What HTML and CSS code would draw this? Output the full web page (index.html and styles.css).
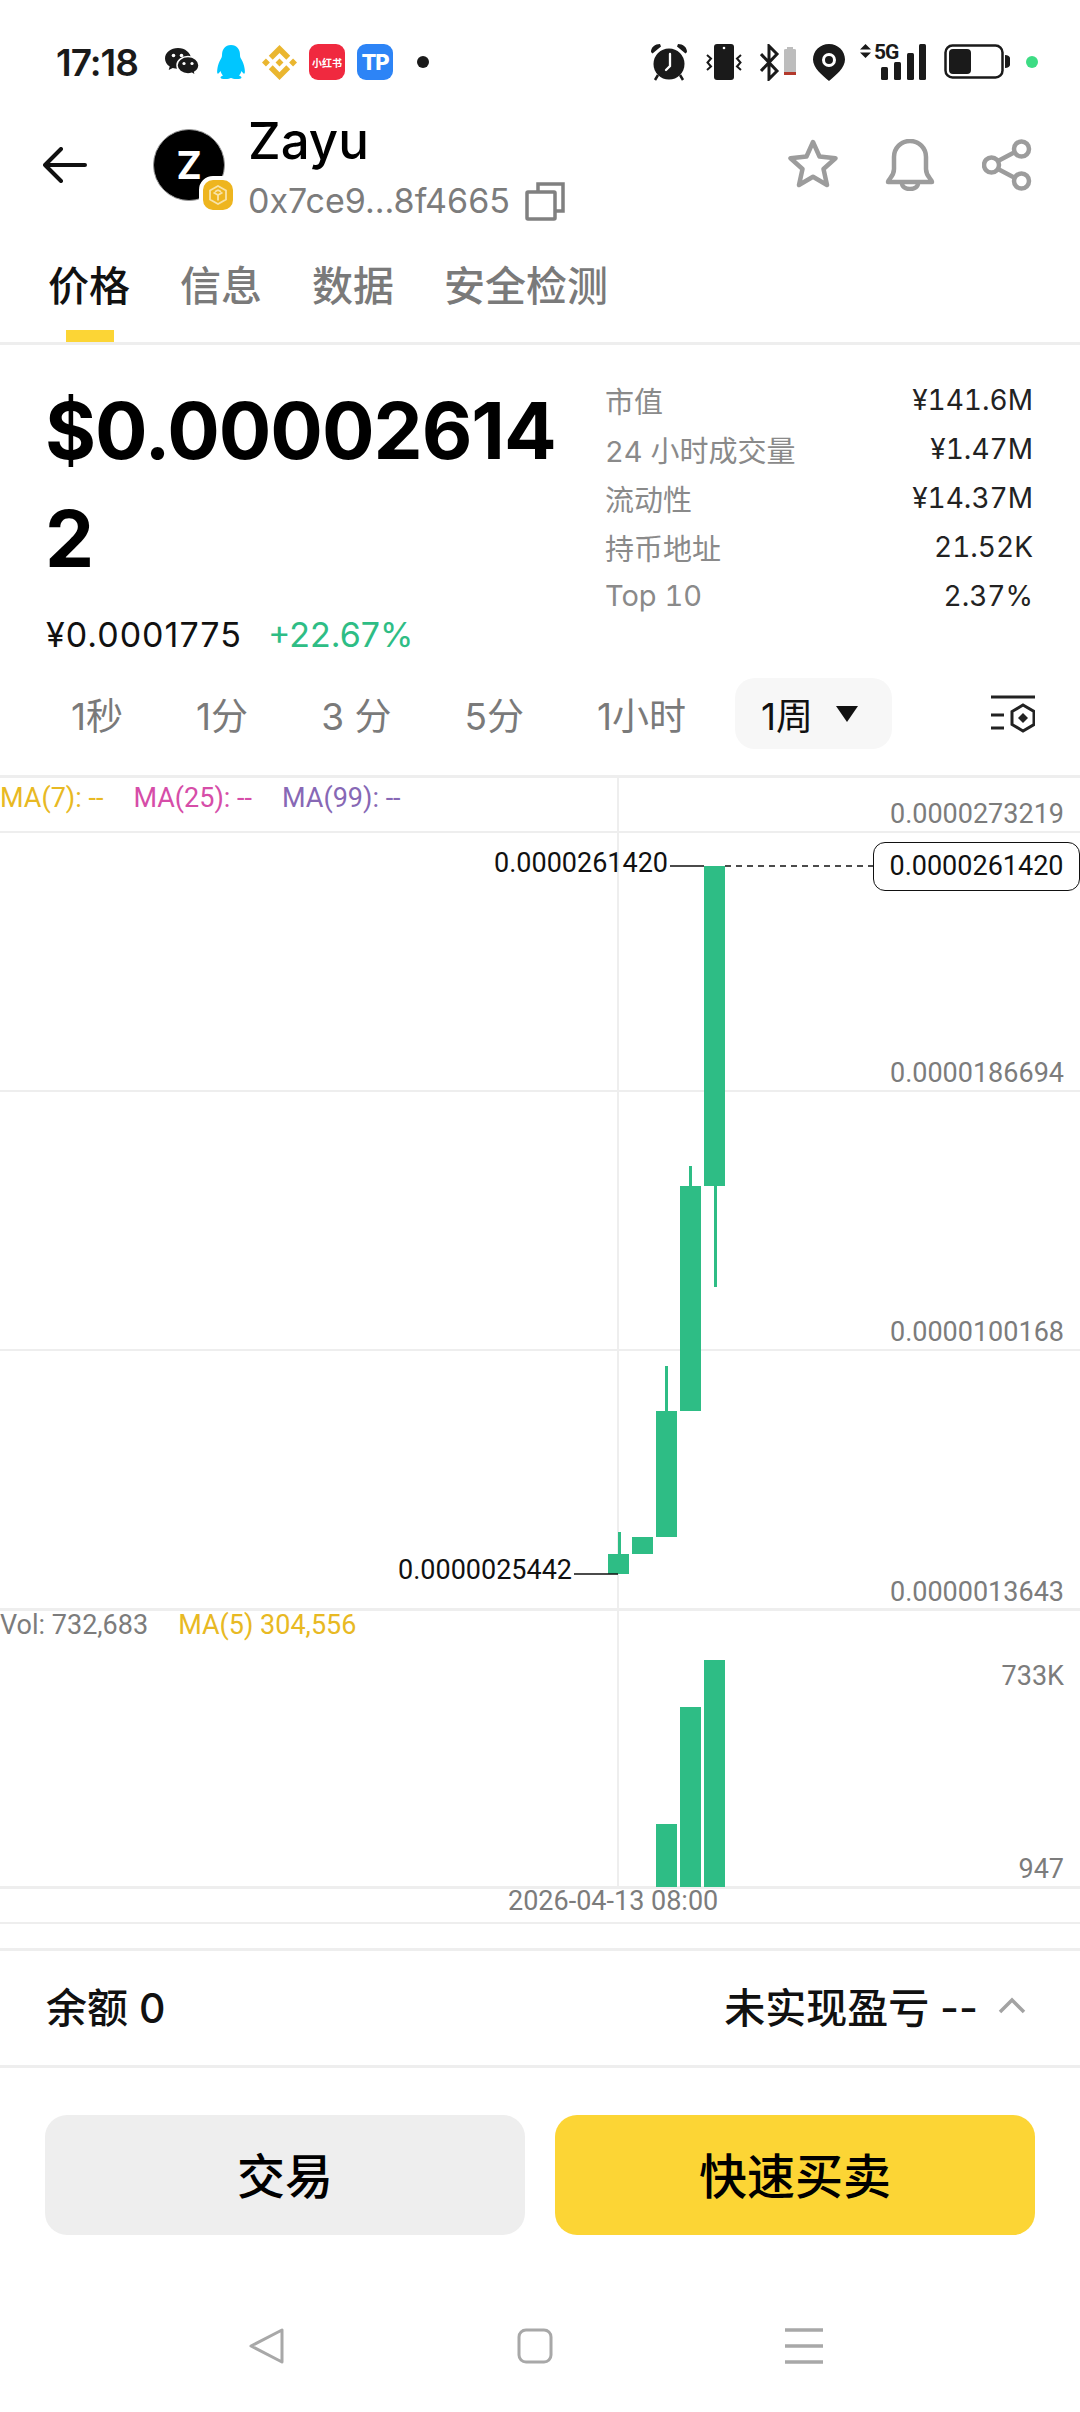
FILE: index.html
```html
<!DOCTYPE html>
<html lang="en">
<head>
    <meta charset="UTF-8">
    <meta name="viewport" content="width=device-width, initial-scale=1.0">
    <title>Zayu</title>
    <link rel="stylesheet" href="styles.css">
</head>
<body>
<div class="page">
    <div class="status">
        <span class="time">17:18</span>
        <svg class="ic-wechat" width="34" height="29" viewBox="0 0 34 29"><path fill="#1a1a1a" d="M13 0C6 0 0 4.600 0 10.500c0 3.300 1.800 6.100 4.700 8l-1 3.500 4-2.100c1.600.5 3.300.8 5.300.8 7 0 13-4.600 13-10.200S20 0 13 0z"/><path fill="#1a1a1a" stroke="#fff" stroke-width="1.500" d="M23 8.500c-6 0-11 3.900-11 8.700s5 8.700 11 8.700c1.400 0 2.700-.2 3.900-.6l3.600 2.300-.8-3.400c2.600-1.600 4.300-4.100 4.300-7 0-4.800-5-8.700-11-8.700z"/><circle cx="8.500" cy="7.500" r="1.800" fill="#fff"/><circle cx="16.500" cy="7.500" r="1.800" fill="#fff"/><circle cx="19" cy="15.500" r="1.600" fill="#fff"/><circle cx="27" cy="15.500" r="1.600" fill="#fff"/></svg>
        <svg class="ic-qq" width="30" height="35" viewBox="0 0 30 35"><path fill="#00c6ff" d="M15 0C9 0 6 4.500 6 10c0 1.500-.3 2.500-1.200 4C3 17 2 20 1.500 23c-.5 3-.5 5 0 5.500.7.600 2-1 3-2.500.6 2 1.600 3.500 2.500 4.500-1.500.5-2.500 1.200-2.500 2 0 1 2 1.500 5 1.500 2.500 0 4.500-.5 5.500-1 1 .5 3 1 5.500 1 3 0 5-.5 5-1.500 0-.8-1-1.500-2.500-2 .9-1 1.900-2.500 2.500-4.500 1 1.500 2.300 3.100 3 2.500.5-.5.5-2.500 0-5.500-.5-3-1.500-6-3.300-9-.9-1.500-1.200-2.500-1.200-4C24 4.500 21 0 15 0z"/></svg>
        <svg class="ic-bnb" width="35" height="35" viewBox="0 0 32 32"><path fill="#eab62f" d="M9.800 13.400 16 7.200l6.200 6.200 3.600-3.600L16 0 6.200 9.800zM0 16l3.600-3.600L7.200 16l-3.600 3.600zM9.800 18.600 16 24.800l6.200-6.200 3.600 3.600L16 32l-9.800-9.800zM24.800 16l3.600-3.600L32 16l-3.600 3.600zM19.600 16 16 12.400 12.400 16l3.600 3.600z"/></svg>
        <span class="app-red">小红书</span>
        <span class="app-tp">TP</span>
        <span class="dot"></span>
        <span class="status-right">
            <svg width="38" height="39" viewBox="0 0 38 39"><path fill="#1a1a1a" d="M1 9C1 4 5 1 10 1l1 2.500L2.500 10.500zM37 9c0-5-4-8-9-8l-1 2.500 8.500 7z"/><circle cx="19" cy="21" r="15.500" fill="#1a1a1a"/><path fill="none" stroke="#1a1a1a" stroke-width="2.500" d="m8 32-3 5M30 32l3 5"/><path fill="none" stroke="#fff" stroke-width="2.300" stroke-linecap="round" d="M20 11v12l-4 4"/></svg>
            <svg width="36" height="36" viewBox="0 0 36 36"><rect x="8" y="0" width="20" height="36" rx="3" fill="#1a1a1a"/><circle cx="18" cy="4" r="1.300" fill="#fff"/><path fill="none" stroke="#1a1a1a" stroke-width="2" d="m1 11 4 3.500-3.500 4 3.500 4-4 3.500M35 11l-4 3.500 3.500 4-3.500 4 4 3.500"/></svg>
            <svg width="36" height="37" viewBox="0 0 36 37"><path fill="none" stroke="#1a1a1a" stroke-width="3" d="m1 10 16 17-8 8V2l8 8L1 27"/><path fill="#bdbdbd" d="M24 6c0-1 1-1 3-1V3h6v2c2 0 3 0 3 1v25H24z"/><rect x="24" y="28" width="12" height="3" fill="#b3392c"/></svg>
            <svg class="ic-pin" width="32" height="37" viewBox="0 0 32 37"><path fill="#1a1a1a" d="M16 0C7 0 0 7 0 15.500 0 24 9 31 16 37c7-6 16-13 16-21.500C32 7 25 0 16 0z"/><circle cx="16" cy="16" r="5.500" fill="none" stroke="#fff" stroke-width="3"/></svg>
            <span class="net">
                <svg width="66" height="36" viewBox="0 0 66 36"><path fill="#1a1a1a" d="M5.500 0 11 5.500H0zM5.500 14 0 8.500h11z"/><rect x="21" y="23" width="7" height="13" rx="1.500" fill="#1a1a1a"/><rect x="34" y="18" width="7" height="18" rx="1.500" fill="#1a1a1a"/><rect x="47" y="9" width="7" height="27" rx="1.500" fill="#1a1a1a"/><rect x="59" y="0" width="7" height="36" rx="1.500" fill="#1a1a1a"/></svg>
                <span class="net-text">5G</span>
            </span>
            <svg width="66" height="36" viewBox="0 0 66 36"><rect x="1.500" y="1.500" width="57" height="32" rx="7" fill="none" stroke="#1a1a1a" stroke-width="2.500"/><rect x="5" y="5" width="22" height="25" rx="4" fill="#1a1a1a"/><path fill="#1a1a1a" d="M61 11c3 0 5 1.500 5 3v7c0 1.500-2 3-5 3z"/></svg>
            <span class="dot-green"></span>
        </span>
    </div>

    <header class="head">
        <svg class="back" width="44" height="36" viewBox="0 0 44 36"><path fill="none" stroke="#111" stroke-width="4" stroke-linecap="round" stroke-linejoin="round" d="M18 2 2 18l16 16M2 18h40"/></svg>
        <div class="avatar">Z
            <span class="chain">
                <svg width="20" height="20" viewBox="0 0 20 20"><path fill="none" stroke="#f8e3a8" stroke-width="1.800" d="m10 1 8 4.500v9L10 19l-8-4.500v-9zM5.500 7.500 10 10l4.500-2.500M10 10v5.500M10 5l3 1.700M10 5 7 6.700"/></svg>
            </span>
        </div>
        <div class="coin">
            <div class="coin-name">Zayu</div>
            <div class="coin-addr">0x7ce9...8f4665
                <svg class="copy" width="40" height="39" viewBox="0 0 40 39"><path fill="none" stroke="#808080" stroke-width="3.500" d="M13 9V2h25v27h-8"/><rect x="2" y="10" width="28" height="27" rx="1" fill="none" stroke="#808080" stroke-width="3.500"/></svg>
            </div>
        </div>
        <div class="head-actions">
            <svg width="50" height="50" viewBox="0 0 50 50"><path fill="none" stroke="#9c9c9c" stroke-width="4.500" stroke-linejoin="round" d="m25 3 6.500 14.500 16 1.800-12 10.700 3.500 16-14-8.200L11 46l3.500-16-12-10.700 16-1.800z"/></svg>
            <svg width="50" height="52" viewBox="0 0 50 52"><path fill="none" stroke="#9c9c9c" stroke-width="4.500" stroke-linejoin="round" d="M3 43c0-3 6-5 6-13V18C9 9 16 2 25 2s16 7 16 16v12c0 8 6 10 6 13z"/><path fill="none" stroke="#9c9c9c" stroke-width="4.500" d="M17 44c0 4 3.500 6 8 6s8-2 8-6"/></svg>
            <svg width="50" height="52" viewBox="0 0 50 52"><g fill="none" stroke="#9c9c9c" stroke-width="4.500"><circle cx="9.500" cy="26" r="7.500"/><circle cx="39.500" cy="10" r="7.500"/><circle cx="39.500" cy="42" r="7.500"/><path d="m16 22 17-9M16 30l17 9"/></g></svg>
        </div>
    </header>

    <nav class="tabs">
        <span class="tab tab-on">价格</span>
        <span class="tab">信息</span>
        <span class="tab">数据</span>
        <span class="tab">安全检测</span>
    </nav>

    <section class="summary">
        <div class="price-box">
            <div class="price">$0.000026142</div>
            <div class="price-sub">
                <span class="cny">¥0.0001775</span>
                <span class="up">+22.67%</span>
            </div>
        </div>
        <ul class="stats">
            <li><span class="stat-name">市值</span><span>¥141.6M</span></li>
            <li><span class="stat-name">24 小时成交量</span><span>¥1.47M</span></li>
            <li><span class="stat-name">流动性</span><span>¥14.37M</span></li>
            <li><span class="stat-name">持币地址</span><span>21.52K</span></li>
            <li><span class="stat-name">Top 10</span><span>2.37%</span></li>
        </ul>
    </section>

    <div class="intervals">
        <span>1秒</span>
        <span>1分</span>
        <span>3 分</span>
        <span>5分</span>
        <span>1小时</span>
        <span class="interval-on">1周<i class="caret"></i></span>
        <svg class="chart-set" width="44" height="38" viewBox="0 0 44 38"><g fill="none" stroke="#222" stroke-width="3"><path d="M0 2h44M0 20h13M0 33h13"/><path d="m32 10 11 6.500v13L32 36l-11-6.500v-13z"/></g><path fill="#222" d="m32 18 5 5-5 5-5-5z"/></svg>
    </div>

    <section class="chart">
        <!-- viewBox uses page coordinates so the candles can be read off the screen -->
        <svg class="plot" width="1080" height="1173" viewBox="0 775 1080 1173">
            <g fill="#eeeeee">
                <rect x="0" y="775" width="1080" height="3"/>
                <rect x="617" y="778" width="2" height="1110"/>
                <rect x="0" y="831" width="1080" height="2"/>
                <rect x="0" y="1090" width="1080" height="2"/>
                <rect x="0" y="1349" width="1080" height="2"/>
                <rect x="0" y="1608" width="1080" height="3"/>
                <rect x="0" y="1886" width="1080" height="3"/>
                <rect x="0" y="1922" width="1080" height="2"/>
            </g>
            <g fill="#2ebd85">
                <rect x="618" y="1532" width="3" height="24"/>
                <rect x="608" y="1554" width="21" height="20"/>
                <rect x="632" y="1537" width="21" height="17"/>
                <rect x="665" y="1366" width="3" height="46"/>
                <rect x="656" y="1411" width="21" height="126"/>
                <rect x="689" y="1166" width="3" height="22"/>
                <rect x="680" y="1186" width="21" height="225"/>
                <rect x="704" y="866" width="21" height="320"/>
                <rect x="714" y="1186" width="3" height="101"/>
                <rect x="656" y="1824" width="21" height="63"/>
                <rect x="680" y="1707" width="21" height="180"/>
                <rect x="704" y="1660" width="21" height="227"/>
            </g>
            <path stroke="#111" stroke-width="1.500" d="M670 866h34M574 1574h44"/>
            <path stroke="#111" stroke-width="1.500" stroke-dasharray="6 5" d="M725 866h148"/>
        </svg>

        <div class="legend">
            <span class="ma7">MA(7): --</span>
            <span class="ma25">MA(25): --</span>
            <span class="ma99">MA(99): --</span>
        </div>
        <div class="legend legend-vol">
            <span class="vol">Vol: 732,683</span>
            <span class="ma7">MA(5) 304,556</span>
        </div>

        <span class="axis a1">0.0000273219</span>
        <span class="axis a2">0.0000186694</span>
        <span class="axis a3">0.0000100168</span>
        <span class="axis a4">0.0000013643</span>
        <span class="axis a5">733K</span>
        <span class="axis a6">947</span>
        <span class="mark mark-high">0.0000261420</span>
        <span class="mark mark-low">0.0000025442</span>
        <span class="mark-box">0.0000261420</span>
        <span class="date">2026-04-13 08:00</span>
    </section>

    <div class="balance">
        <span>余额 0</span>
        <span class="pnl">未实现盈亏 --
            <svg width="28" height="17" viewBox="0 0 28 17"><path fill="none" stroke="#a3a3a3" stroke-width="3.500" d="M2 15 14 3l12 12"/></svg>
        </span>
    </div>

    <div class="actions">
        <button class="btn btn-grey">交易</button>
        <button class="btn btn-yellow">快速买卖</button>
    </div>

    <div class="sysnav">
        <svg width="36" height="36" viewBox="0 0 36 36"><path fill="none" stroke="#a8a8a8" stroke-width="3" stroke-linejoin="round" d="M33 2v32L2 18z"/></svg>
        <svg width="36" height="36" viewBox="0 0 36 36"><rect x="2" y="2" width="32" height="32" rx="7" fill="none" stroke="#a8a8a8" stroke-width="3"/></svg>
        <svg width="38" height="36" viewBox="0 0 38 36"><path stroke="#a8a8a8" stroke-width="3.500" d="M0 2h38M0 18h38M0 34h38"/></svg>
    </div>
</div>
</body>
</html>
```

FILE: styles.css
```css
* {
    box-sizing: border-box;
}
body {
    margin: 0;
    padding: 0;
    background-color: #fff;
    color: #000;
    font-family: Inter, "Noto Sans CJK SC", sans-serif;
}
.page {
    width: 1080px;
    height: 2412px;
    overflow: hidden;
}

/* status bar */
.status {
    height: 124px;
    padding: 0 0 0 56px;
    display: flex;
    align-items: center;
}
.time {
    width: 78px;
    font-size: 37px;
    font-weight: 600;
    color: #1a1a1a;
    letter-spacing: -1px;
    white-space: nowrap;
}
.ic-wechat {
    margin-left: 31px;
}
.ic-qq {
    margin-left: 17px;
}
.ic-bnb {
    margin-left: 16px;
}
.app-red, .app-tp {
    width: 36px;
    height: 36px;
    border-radius: 9px;
    display: flex;
    align-items: center;
    justify-content: center;
    color: #fff;
}
.app-red {
    margin-left: 12px;
    background-color: #f0293f;
    font-size: 10px;
    font-weight: 700;
    white-space: nowrap;
}
.app-tp {
    margin-left: 12px;
    background-color: #2d84f6;
    font-size: 22px;
    font-weight: 800;
    letter-spacing: -1px;
}
.dot {
    width: 12px;
    height: 12px;
    margin-left: 24px;
    border-radius: 50%;
    background-color: #1a1a1a;
}
.status-right {
    margin-left: 221px;
    display: flex;
    align-items: center;
    gap: 18px;
}
.ic-pin {
    margin-left: -1px;
}
.net {
    position: relative;
    height: 36px;
    margin-left: -3px;
}
.net-text {
    position: absolute;
    left: 14px;
    top: -1px;
    font-family: Roboto, sans-serif;
    font-size: 21px;
    font-weight: 700;
    line-height: 18px;
    letter-spacing: -1px;
    color: #1a1a1a;
}
.dot-green {
    width: 12px;
    height: 12px;
    margin-left: -2px;
    border-radius: 50%;
    background-color: #3ddc84;
}

/* coin header */
.head {
    height: 92px;
    padding-left: 43px;
    display: flex;
    align-items: flex-start;
}
.back {
    margin-top: 23px;
}
.avatar {
    position: relative;
    width: 72px;
    height: 72px;
    margin: 5px 0 0 66px;
    border-radius: 50%;
    border: 1px solid #999;
    background-color: #000;
    color: #fff;
    font-size: 38px;
    font-weight: 700;
    line-height: 70px;
    text-align: center;
}
.chain {
    position: absolute;
    right: -13px;
    bottom: -14px;
    width: 38px;
    height: 38px;
    border-radius: 14px;
    border: 4px solid #fff;
    background-color: #eeb51f;
    display: flex;
    align-items: center;
    justify-content: center;
}
.coin {
    margin-left: 23px;
}
.coin-name {
    font-size: 51px;
    font-weight: 500;
    line-height: 44px;
    margin-top: -5px;
}
.coin-addr {
    margin-top: 18px;
    font-size: 34px;
    line-height: 40px;
    color: #7c7c7c;
    display: flex;
    align-items: center;
    white-space: nowrap;
}
.copy {
    margin-left: 15px;
    flex: none;
}
.head-actions {
    margin-left: auto;
    padding: 15px 48px 0 0;
    display: flex;
    gap: 47px;
}

/* tabs */
.tabs {
    height: 129px;
    padding: 48px 0 0 48px;
    display: flex;
    gap: 50px;
    border-bottom: 3px solid #eee;
}
.tab {
    position: relative;
    font-size: 41px;
    font-weight: 500;
    line-height: 44px;
    color: #7a7a7a;
}
.tab-on {
    color: #111;
}
.tab-on::after {
    content: "";
    position: absolute;
    left: 18px;
    bottom: 0;
    width: 48px;
    height: 12px;
    background-color: #fcd535;
}

/* price block */
.summary {
    height: 333px;
    padding-left: 46px;
    display: flex;
}
.price-box {
    width: 559px;
}
.price {
    margin: 32px 0 0 -1px;
    width: 530px;
    font-size: 78px;
    font-weight: 700;
    line-height: 108px;
    letter-spacing: -1px;
    word-break: break-all;
}
.price-sub {
    margin-top: 20px;
    display: flex;
    gap: 26px;
    font-size: 34px;
    line-height: 44px;
    color: #111;
}
.cny {
    letter-spacing: 1px;
}
.up {
    color: #2ebd85;
}
.stats {
    list-style-type: none;
    width: 428px;
    margin: 30px 0 0;
    padding: 0;
    font-size: 28px;
    font-variant-numeric: tabular-nums;
    color: #222;
}
.stats li {
    height: 49px;
    display: flex;
    justify-content: space-between;
    align-items: center;
}
.stat-name {
    font-size: 29px;
    color: #8a8a8a;
}

/* interval selector */
.intervals {
    height: 71px;
    padding: 0 45px 0 71px;
    display: flex;
    align-items: center;
    gap: 73px;
    font-size: 37px;
    color: #7a7a7a;
    white-space: nowrap;
}
.interval-on {
    width: 157px;
    height: 71px;
    margin-left: -24px;
    padding-left: 26px;
    border-radius: 20px;
    background-color: #f7f7f7;
    color: #111;
    display: flex;
    align-items: center;
}
.caret {
    margin-left: 23px;
    border-left: 11px solid transparent;
    border-right: 11px solid transparent;
    border-top: 16px solid #111;
}
.chart-set {
    margin-left: auto;
}

/* chart */
.chart {
    position: relative;
    height: 1176px;
    margin-top: 26px;
    border-bottom: 3px solid #eee;
    font-family: Roboto, sans-serif;
    font-size: 27px;
    line-height: 32px;
}
.plot {
    position: absolute;
    left: 0;
    top: 0;
}
.legend {
    position: absolute;
    left: 0;
    top: 7px;
    display: flex;
    gap: 30px;
    white-space: nowrap;
}
.legend-vol {
    top: 834px;
}
.ma7 {
    color: #e8b923;
}
.ma25 {
    color: #d64da8;
}
.ma99 {
    color: #8768b5;
}
.vol {
    color: #7c7c7c;
}
.axis {
    position: absolute;
    right: 16px;
    color: #7c7c7c;
}
.a1 { top: 23px; }
.a2 { top: 282px; }
.a3 { top: 541px; }
.a4 { top: 801px; }
.a5 { top: 885px; }
.a6 { top: 1078px; }
.mark {
    position: absolute;
    color: #111;
}
.mark-high {
    left: 494px;
    top: 72px;
}
.mark-low {
    left: 398px;
    top: 779px;
}
.mark-box {
    position: absolute;
    right: 0;
    top: 67px;
    width: 207px;
    height: 49px;
    border: 1.500px solid #111;
    border-radius: 12px;
    background-color: #fff;
    color: #111;
    line-height: 46px;
    text-align: center;
}
.date {
    position: absolute;
    left: 508px;
    top: 1110px;
    color: #7c7c7c;
    white-space: nowrap;
}

/* balance row */
.balance {
    height: 117px;
    padding: 0 54px 6px 46px;
    display: flex;
    justify-content: space-between;
    align-items: center;
    border-bottom: 3px solid #eee;
    font-size: 41px;
    font-weight: 500;
    color: #111;
}
.pnl {
    display: flex;
    align-items: center;
    gap: 20px;
}

/* buttons */
.actions {
    padding: 47px 45px 0;
    display: flex;
    gap: 30px;
}
.btn {
    flex: 1;
    height: 120px;
    padding: 0 0 4px;
    border: 0;
    border-radius: 22px;
    font-family: "Noto Sans CJK SC", sans-serif;
    font-size: 48px;
    font-weight: 500;
    color: #000;
}
.btn-grey {
    background-color: #eee;
}
.btn-yellow {
    background-color: #fcd535;
}

/* android nav */
.sysnav {
    margin-top: 93px;
    padding-left: 249px;
    display: flex;
    gap: 232px;
}
```
